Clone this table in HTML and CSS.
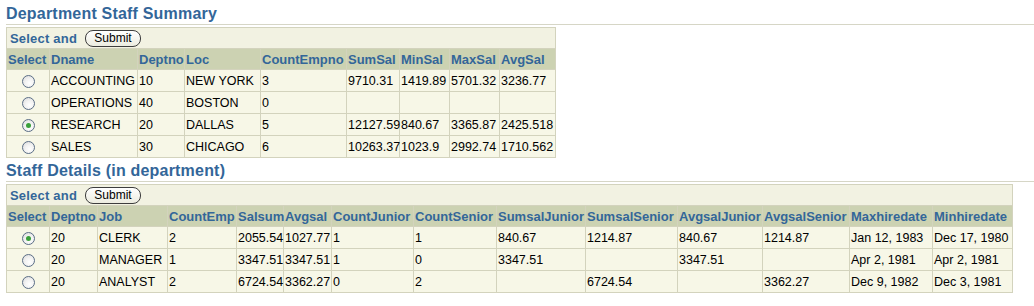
FILE: index.html
```html
<!DOCTYPE html>
<html>
<head>
<meta charset="utf-8">
<link rel="stylesheet" href="styles.css">
</head>
<body>
<div class="page">
  <h2 class="sec-title">Department Staff Summary</h2>
  <table class="grid t1">
    <colgroup>
      <col style="width:43px"><col style="width:88px"><col style="width:47px"><col style="width:76px"><col style="width:86px"><col style="width:53px"><col style="width:50px"><col style="width:50px"><col style="width:56px">
    </colgroup>
    <tr class="ctl"><td colspan="9"><span class="ctl-label">Select and</span><button class="btn">Submit</button></td></tr>
    <tr class="hdr"><th>Select</th><th>Dname</th><th>Deptno</th><th>Loc</th><th>CountEmpno</th><th>SumSal</th><th>MinSal</th><th>MaxSal</th><th>AvgSal</th></tr>
    <tr><td class="sel"><span class="radio"></span></td><td>ACCOUNTING</td><td>10</td><td>NEW YORK</td><td>3</td><td>9710.31</td><td>1419.89</td><td>5701.32</td><td>3236.77</td></tr>
    <tr><td class="sel"><span class="radio"></span></td><td>OPERATIONS</td><td>40</td><td>BOSTON</td><td>0</td><td></td><td></td><td></td><td></td></tr>
    <tr><td class="sel"><span class="radio on"></span></td><td>RESEARCH</td><td>20</td><td>DALLAS</td><td>5</td><td>12127.59</td><td>840.67</td><td>3365.87</td><td>2425.518</td></tr>
    <tr><td class="sel"><span class="radio"></span></td><td>SALES</td><td>30</td><td>CHICAGO</td><td>6</td><td>10263.37</td><td>1023.9</td><td>2992.74</td><td>1710.562</td></tr>
  </table>

  <h2 class="sec-title second">Staff Details (in department)</h2>
  <table class="grid t2">
    <colgroup>
      <col style="width:43px"><col style="width:48px"><col style="width:70px"><col style="width:69px"><col style="width:47px"><col style="width:48px"><col style="width:82px"><col style="width:83px"><col style="width:89px"><col style="width:92px"><col style="width:85px"><col style="width:87px"><col style="width:83px"><col style="width:80px">
    </colgroup>
    <tr class="ctl"><td colspan="14"><span class="ctl-label">Select and</span><button class="btn">Submit</button></td></tr>
    <tr class="hdr"><th>Select</th><th>Deptno</th><th>Job</th><th>CountEmp</th><th>Salsum</th><th>Avgsal</th><th>CountJunior</th><th>CountSenior</th><th>SumsalJunior</th><th>SumsalSenior</th><th>AvgsalJunior</th><th>AvgsalSenior</th><th>Maxhiredate</th><th>Minhiredate</th></tr>
    <tr><td class="sel"><span class="radio on"></span></td><td>20</td><td>CLERK</td><td>2</td><td>2055.54</td><td>1027.77</td><td>1</td><td>1</td><td>840.67</td><td>1214.87</td><td>840.67</td><td>1214.87</td><td>Jan 12, 1983</td><td>Dec 17, 1980</td></tr>
    <tr><td class="sel"><span class="radio"></span></td><td>20</td><td>MANAGER</td><td>1</td><td>3347.51</td><td>3347.51</td><td>1</td><td>0</td><td>3347.51</td><td></td><td>3347.51</td><td></td><td>Apr 2, 1981</td><td>Apr 2, 1981</td></tr>
    <tr><td class="sel"><span class="radio"></span></td><td>20</td><td>ANALYST</td><td>2</td><td>6724.54</td><td>3362.27</td><td>0</td><td>2</td><td></td><td>6724.54</td><td></td><td>3362.27</td><td>Dec 9, 1982</td><td>Dec 3, 1981</td></tr>
  </table>
</div>
</body>
</html>
```
FILE: styles.css
```css
html, body {
  margin: 0;
  padding: 0;
  background: #ffffff;
}
.page {
  padding: 4px 0 0 6px;
  font-family: "Liberation Sans", Arial, sans-serif;
  font-size: 12.5px;
  color: #000;
}
.sec-title {
  margin: 0;
  font-size: 16px;
  font-weight: bold;
  line-height: 20px;
  height: 20px;
  color: #336699;
  border-bottom: 1px solid #d6d6c6;
  letter-spacing: 0.2px;
}
.sec-title.second {
  margin-top: 3px;
}
.grid {
  border-collapse: collapse;
  table-layout: fixed;
  margin-top: 2px;
  border: 1px solid #d3d3bd;
}
.t1 { width: 549px; }
.t2 { width: 1006px; }
.grid td, .grid th {
  border: 1px solid #d3d3bd;
  padding: 0 0 0 1px;
  text-align: left;
  white-space: nowrap;
  height: 21px;
  box-sizing: border-box;
}
.grid td {
  background: #f7f7e7;
  height: 22px;
}
.grid tr.ctl td {
  background: #f2f2e2;
  height: 21px;
  padding: 0 3px;
}
.ctl-label {
  font-size: 13px;
  font-weight: bold;
  color: #336699;
  letter-spacing: 0.2px;
  vertical-align: middle;
}
.btn {
  font-family: "Liberation Sans", Arial, sans-serif;
  font-size: 12px;
  height: 17px;
  width: 56px;
  margin-left: 8px;
  padding: 0;
  border: 1px solid #3d3d3d;
  border-radius: 8px;
  background: linear-gradient(#ffffff, #ecece0);
  color: #000;
  vertical-align: middle;
  line-height: 15px;
}
.grid th {
  background: #ccd2b2;
  color: #336699;
  font-size: 13px;
  font-weight: bold;
}
.grid td.sel {
  text-align: center;
  padding: 0;
}
.radio {
  display: inline-block;
  width: 11px;
  height: 11px;
  border: 1px solid #5b6e86;
  border-radius: 50%;
  background: radial-gradient(circle at 60% 65%, #ffffff 0%, #f2f2f2 45%, #d8d8d8 100%);
  vertical-align: middle;
  position: relative;
  margin-left: 1px;
}
.radio.on::after {
  content: "";
  position: absolute;
  left: 3px;
  top: 3px;
  width: 5px;
  height: 5px;
  border-radius: 50%;
  background: #3aa03a;
}
```
